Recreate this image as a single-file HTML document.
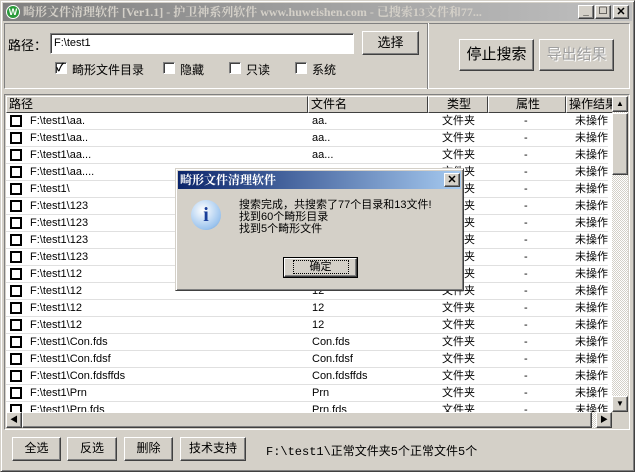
<!DOCTYPE html>
<html><head><meta charset="utf-8"><style>
*{box-sizing:border-box;margin:0;padding:0}
body{width:635px;height:472px;background:#d4d0c8;font-family:"Liberation Sans","Noto Sans CJK SC",sans-serif;font-size:12px;position:relative;overflow:hidden;color:#000}
.a{position:absolute}
.btn{position:absolute;background:#d4d0c8;border:1px solid;border-color:#fff #404040 #404040 #fff;box-shadow:inset -1px -1px #808080;text-align:center}
.sunk{border:1px solid;border-color:#808080 #fff #fff #808080;box-shadow:inset 1px 1px #404040}
.cb{position:absolute;width:12px;height:12px;background:#fff;border:1px solid;border-color:#808080 #fff #fff #808080;box-shadow:inset 1px 1px #404040}
.row{position:absolute;left:0;width:602px;height:17px;border-bottom:1px solid #e0e0e0;font-size:11px;line-height:16px}
.row span{position:absolute;top:0}
.rcb{position:absolute;left:4px;top:2px;width:12px;height:12px;border:2px solid #000;background:#fff}
.hd{position:absolute;top:0;height:17px;background:#d4d0c8;border:1px solid;border-color:#fff #404040 #404040 #fff;line-height:15px;padding-left:2px}
</style></head><body>
<div class="a" style="left:0;top:0;width:635px;height:472px;border:1px solid;border-color:#d4d0c8 #404040 #404040 #d4d0c8;box-shadow:inset 1px 1px #fff,inset -1px -1px #808080"></div>
<div class="a" style="left:3px;top:3px;width:629px;height:18px;background:linear-gradient(90deg,#808080,#c0c0c0);color:#d4d0c8;font-family:'Liberation Serif','Noto Serif CJK SC',serif;font-weight:bold;font-size:12px;line-height:18px;padding-left:20px;white-space:nowrap;overflow:hidden">畸形文件清理软件 [Ver1.1] - 护卫神系列软件 www.huweishen.com - 已搜索13文件和77...</div>
<div class="a" style="left:6px;top:5px;width:14px;height:14px;border-radius:50%;background:#2a9a3a;border:1px solid #fff;color:#fff;font-size:9px;line-height:12px;text-align:center;font-weight:bold">W</div>
<div class="btn" style="left:578px;top:5px;width:16px;height:14px;font-size:10px;line-height:12px;font-weight:bold">_</div>
<div class="btn" style="left:595px;top:5px;width:16px;height:14px;font-size:10px;line-height:12px">☐</div>
<div class="btn" style="left:613px;top:5px;width:16px;height:14px;font-size:11px;line-height:12px;font-weight:bold">✕</div>
<div class="a" style="left:4px;top:23px;width:626px;height:66px;border:1px solid;border-color:#808080 #fff #fff #808080"></div>
<div class="a" style="left:427px;top:23px;width:2px;height:66px;border-left:1px solid #808080;border-right:1px solid #fff"></div>
<div class="a" style="left:8px;top:35px;font-size:13px">路径：</div>
<div class="a sunk" style="left:50px;top:33px;width:304px;height:21px;background:#fff;font-size:11px;line-height:18px;padding-left:3px">F:\test1</div>
<div class="btn" style="left:362px;top:31px;width:57px;height:24px;line-height:21px;font-size:13px">选择</div>
<div class="cb" style="left:55px;top:62px"></div><div class="a" style="left:56px;top:59px;font-size:11px;font-weight:bold">✓</div>
<div class="a" style="left:72px;top:61px;font-size:12px">畸形文件目录</div>
<div class="cb" style="left:163px;top:62px"></div><div class="a" style="left:180px;top:61px">隐藏</div>
<div class="cb" style="left:229px;top:62px"></div><div class="a" style="left:246px;top:61px">只读</div>
<div class="cb" style="left:295px;top:62px"></div><div class="a" style="left:312px;top:61px">系统</div>
<div class="btn" style="left:459px;top:39px;width:75px;height:32px;line-height:29px;font-size:15px">停止搜索</div>
<div class="btn" style="left:539px;top:39px;width:75px;height:32px;line-height:29px;font-size:15px;color:#a0a0a0;text-shadow:1px 1px #fff">导出结果</div>
<div class="a" style="left:4px;top:94px;width:626px;height:336px;border:1px solid;border-color:#808080 #fff #fff #808080"></div>
<div class="a" style="left:6px;top:96px;width:606px;height:316px;background:#fff;overflow:hidden">
<div class="hd" style="left:0;width:302px">路径</div>
<div class="hd" style="left:302px;width:120px">文件名</div>
<div class="hd" style="left:422px;width:60px;text-align:center">类型</div>
<div class="hd" style="left:482px;width:78px;text-align:center">属性</div>
<div class="hd" style="left:560px;width:60px;white-space:nowrap;overflow:hidden">操作结果</div>
<div id="rows"></div>
</div>
<div class="a" style="left:612px;top:96px;width:16px;height:316px;background:repeating-conic-gradient(#fff 0 25%,#d4d0c8 0 50%) 0 0/2px 2px"></div>
<div class="btn" style="left:612px;top:96px;width:16px;height:16px;font-size:8px;line-height:14px">▲</div>
<div class="btn" style="left:612px;top:113px;width:16px;height:62px"></div>
<div class="btn" style="left:612px;top:396px;width:16px;height:16px;font-size:8px;line-height:14px">▼</div>
<div class="a" style="left:6px;top:412px;width:606px;height:16px;background:repeating-conic-gradient(#fff 0 25%,#d4d0c8 0 50%) 0 0/2px 2px"></div>
<div class="btn" style="left:6px;top:412px;width:16px;height:16px;font-size:8px;line-height:14px">◀</div>
<div class="btn" style="left:22px;top:412px;width:570px;height:16px"></div>
<div class="btn" style="left:596px;top:412px;width:16px;height:16px;font-size:8px;line-height:14px">▶</div>
<div class="a" style="left:612px;top:412px;width:16px;height:16px;background:#d4d0c8"></div>
<div class="btn" style="left:12px;top:437px;width:49px;height:24px;line-height:21px">全选</div>
<div class="btn" style="left:67px;top:437px;width:50px;height:24px;line-height:21px">反选</div>
<div class="btn" style="left:124px;top:437px;width:49px;height:24px;line-height:21px">删除</div>
<div class="btn" style="left:180px;top:437px;width:66px;height:24px;line-height:21px">技术支持</div>
<div class="a" style="left:266px;top:442px;font-family:'Liberation Mono','Noto Sans CJK SC',monospace;font-size:12px">F:\test1\正常文件夹5个正常文件5个</div>
<div class="a" style="left:175px;top:168px;width:289px;height:123px;background:#d4d0c8;border:1px solid;border-color:#d4d0c8 #404040 #404040 #d4d0c8;box-shadow:inset 1px 1px #fff,inset -1px -1px #808080">
<div class="a" style="left:2px;top:2px;width:283px;height:18px;background:linear-gradient(90deg,#0a246a,#a6caf0);color:#fff;font-weight:bold;font-size:12px;line-height:18px;padding-left:2px;font-family:'Liberation Serif','Noto Serif CJK SC',serif">畸形文件清理软件</div>
<div class="btn" style="left:268px;top:4px;width:16px;height:14px;font-size:11px;line-height:12px;font-weight:bold">✕</div>
<div class="a" style="left:15px;top:31px;width:30px;height:30px;border-radius:50%;background:radial-gradient(circle at 40% 35%,#fff,#9cc4ee 70%,#5a8fcc);color:#1a3f9a;font-family:'Liberation Serif',serif;font-weight:bold;font-size:20px;line-height:30px;text-align:center">i</div>
<div class="a" style="left:63px;top:30px;font-size:11px;line-height:12px">搜索完成，共搜索了77个目录和13文件!<br>找到60个畸形目录<br>找到5个畸形文件</div>
<div class="a" style="left:107px;top:88px;width:75px;height:21px;border:1px solid #000"><div class="btn" style="left:0;top:0;width:73px;height:19px;line-height:17px;font-size:11px"><span style="outline:1px dotted #000;padding:0 16px">确定</span></div></div>
</div>
<script>
var d=[["F:\\test1\\aa.","aa."],["F:\\test1\\aa..","aa.."],["F:\\test1\\aa...","aa..."],["F:\\test1\\aa....","aa...."],["F:\\test1\\",""],["F:\\test1\\123","123"],["F:\\test1\\123","123"],["F:\\test1\\123","123"],["F:\\test1\\123","123"],["F:\\test1\\12","12"],["F:\\test1\\12","12"],["F:\\test1\\12","12"],["F:\\test1\\12","12"],["F:\\test1\\Con.fds","Con.fds"],["F:\\test1\\Con.fdsf","Con.fdsf"],["F:\\test1\\Con.fdsffds","Con.fdsffds"],["F:\\test1\\Prn","Prn"],["F:\\test1\\Prn.fds","Prn.fds"]];
var h="";d.forEach(function(r,i){h+='<div class="row" style="top:'+(17+i*17)+'px"><div class="rcb"></div><span style="left:24px">'+r[0]+'</span><span style="left:306px">'+r[1]+'</span><span style="left:436px">文件夹</span><span style="left:518px">-</span><span style="left:569px;white-space:nowrap">未操作</span></div>'});
document.getElementById("rows").innerHTML=h;
</script>
</body></html>
